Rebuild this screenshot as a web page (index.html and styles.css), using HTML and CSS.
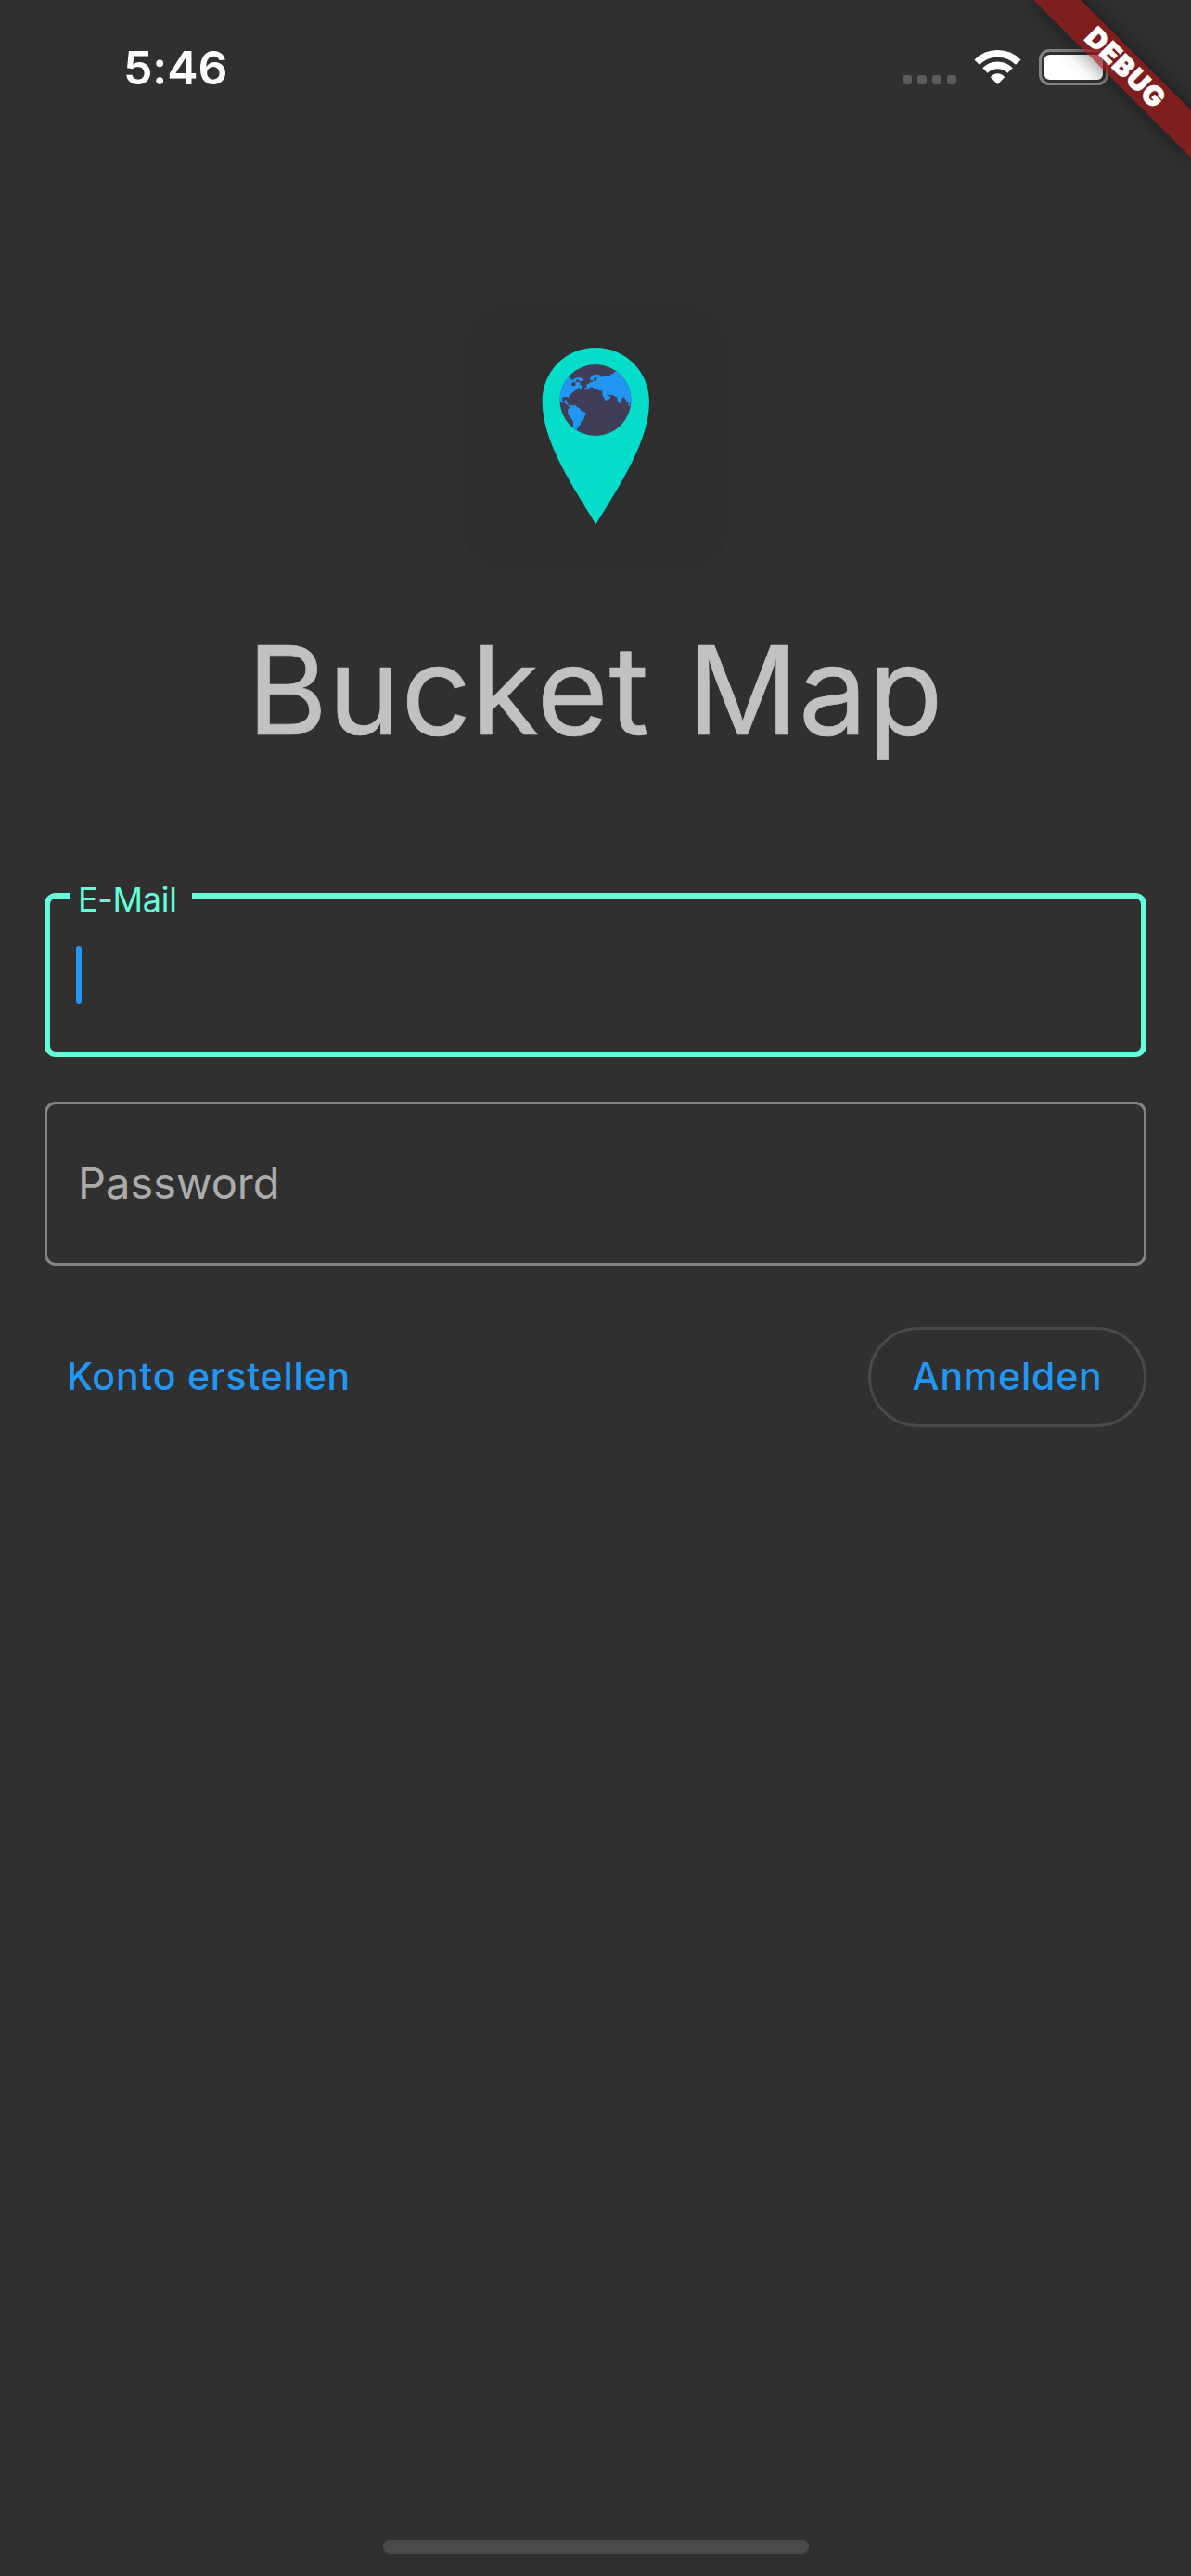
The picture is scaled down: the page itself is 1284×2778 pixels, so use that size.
FILE: index.html
```html
<!DOCTYPE html>
<html lang="de">
<head>
<meta charset="utf-8">
<title>Bucket Map</title>
<link rel="stylesheet" href="styles.css">
</head>
<body>
<header class="status">
  <span class="time">5:46</span>
  <svg class="status-icons" width="240" height="45" viewBox="0 0 720 135" aria-hidden="true">
    <g fill="#5c5c5c">
      <rect x="9" y="93" width="30" height="30" rx="9"/>
      <rect x="57" y="93" width="30" height="30" rx="9"/>
      <rect x="105" y="93" width="30" height="30" rx="9"/>
      <rect x="153" y="93" width="30" height="30" rx="9"/>
    </g>
    <g fill="none" stroke="#fff" stroke-width="23">
      <path d="M249.500 51.500A94.500 94.500 0 0 1 383.500 51.500"/>
      <path d="M275.800 77.800A57.500 57.500 0 0 1 357.200 77.800"/>
    </g>
    <path d="M316.500 123L293.500 100Q303 88 316.500 88T339.500 100Z" fill="#fff"/>
    <rect x="454.500" y="13.500" width="216" height="108" rx="30" fill="none" stroke="#838383" stroke-width="9"/>
    <rect x="467" y="27" width="190" height="81" rx="18" fill="#fff"/>
    <path d="M684 50Q697 57 697 67T684 85Z" fill="#838383"/>
  </svg>
</header>
<div class="debug-corner"><div class="debug"><div class="debug-shadow"></div><div class="debug-band">DEBUG</div></div></div>
<main class="login">
  <svg class="logo" width="288" height="288" viewBox="54 51 864 864" aria-hidden="true">
    <clipPath id="globe"><circle cx="486" cy="364.500" r="115.500"/></clipPath>
    <path d="M486 195C583 195 660 272 660 369C660 490 575 625 487 766C399 625 314 490 314 369C314 272 389 195 486 195Z" fill="#05dcc9"/>
    <circle cx="486" cy="364.500" r="115.500" fill="#403d56"/>
    <g clip-path="url(#globe)" fill="#2296f3">
      <path transform="translate(300 180)" d="M60 195V100L98 108L106 112V117L100 119L107 117L113 119L120 113L131 111L143 114V123H135L128 118L122 121L124 126L113 127L107 133L110 137L119 139L122 137L120 130L125 126L132 125L137 129L136 134L141 137V147H136L134 143L129 146L132 149L124 150L113 159L101 170L99 178L94 174H84L79 177L78 186L86 189L88 184L93 183L91 192L96 194L98 201L105 204L102 208L94 199L88 195L84 192L72 193Z"/>
      <path transform="translate(300 180)" d="M104 204L107 199L111 202L121 201L125 206L131 209L137 213L139 220L147 221L154 225L156 230L150 238L149 247L140 253L138 262L131 270V273L126 277V283L108 279L111 272L114 268V255L110 247L103 240L96 226L97 213L103 210Z"/>
      <path fill-rule="evenodd" d="M450 325L460 322L456 316L467 308L478 304V300H469V292L480 283L494 281L503 285L501 290L515 288L535 284V280L547 279L543 274L556 271L585 285L610 312V375H596L599 384H594L591 378L596 372L588 370L583 362L578 354L571 360L568 364V373L562 375L556 364V356L542 348H530L522 343L525 349L536 354L530 362L518 366L513 357L508 345V335L494 332V327L489 326L487 331L478 324L469 322L464 330L450 331ZM480 299L481 294L486 291L492 292L488 297L492 300L482 303Z"/>
    </g>
  </svg>
  <h1 class="title">Bucket Map</h1>
  <div class="field field-active"><label class="field-label">E-Mail</label><div class="caret"></div></div>
  <div class="field field-idle"><span class="placeholder">Password</span></div>
  <div class="actions"><a class="link">Konto erstellen</a><a class="button"><span>Anmelden</span></a></div>
</main>
<div class="home"></div>
</body>
</html>
```
FILE: styles.css
```css
* { box-sizing: border-box; }
body {
  margin: 0;
  width: 1284px;
  height: 2778px;
  position: relative;
  overflow: hidden;
  display: flex;
  flex-direction: column;
  background: #303030;
  font-family: Inter, "Liberation Sans", sans-serif;
}
.status {
  flex: none;
  height: 141px;
  padding: 43px 74px 0 133px;
  display: flex;
  justify-content: space-between;
  align-items: flex-start;
}
.time {
  color: #fff;
  font-size: 50px;
  line-height: 60px;
  font-weight: 600;
  letter-spacing: -.1px;
}
.status-icons { margin-top: 7px; }
.debug-corner {
  position: absolute;
  top: 0;
  right: 0;
  width: 260px;
  height: 260px;
  overflow: hidden;
}
.debug {
  position: absolute;
  top: 0;
  left: 260px;
  width: 0;
  height: 0;
  transform: rotate(45deg);
}
.debug-shadow, .debug-band {
  position: absolute;
  top: 83.500px;
  left: -120px;
  width: 240px;
  height: 36px;
}
.debug-shadow { background: rgba(0, 0, 0, .5); filter: blur(12px); }
.debug-band {
  padding-left: 4px;
  background: rgba(183, 28, 28, .627);
  color: #fff;
  font-size: 29.500px;
  line-height: 35px;
  font-weight: 900;
  letter-spacing: 1.200px;
  -webkit-text-stroke: .8px #fff;
  text-align: center;
}
.login {
  flex: 1;
  padding: 186px 48px 0;
  display: flex;
  flex-direction: column;
}
.logo {
  align-self: center;
  border-radius: 48px;
  background: #2e2e2e;
}
.title {
  margin: 49px 0 139px;
  height: 160px;
  line-height: 160px;
  font-size: 132px;
  font-weight: 400;
  letter-spacing: .7px;
  word-spacing: 3px;
  -webkit-text-stroke: .7px #c1c1c1;
  text-align: center;
  white-space: nowrap;
  color: #c1c1c1;
}
.field {
  position: relative;
  height: 177px;
  border-radius: 12px;
  display: flex;
  align-items: center;
}
.field-active { border: 6px solid #64ffda; padding: 0 28px; }
.field-idle { border: 3px solid #838383; padding: 0 33px; margin-top: 48px; }
.field-label {
  position: absolute;
  top: -23px;
  left: 21px;
  width: 132px;
  height: 48px;
  padding-left: 9px;
  line-height: 48px;
  background: #303030;
  color: #64ffda;
  font-size: 36px;
  letter-spacing: -.3px;
}
.caret { width: 6px; height: 63px; border-radius: 3px; background: #2196f3; }
.placeholder { color: #acacac; font-size: 47px; line-height: 60px; padding-bottom: 2px; }
.actions {
  margin-top: 66px;
  padding-left: 24px;
  display: flex;
  justify-content: space-between;
  align-items: center;
  color: #2196f3;
  font-size: 41px;
  font-weight: 500;
  letter-spacing: .780px;
}
.link, .button span { padding-bottom: 2px; }
.button {
  width: 300px;
  height: 108px;
  display: flex;
  align-items: center;
  justify-content: center;
  border: 3px solid #4a4a4a;
  border-radius: 54px;
}
.home {
  flex: none;
  align-self: center;
  width: 459px;
  height: 15px;
  margin-bottom: 24px;
  border-radius: 8px;
  background: #4a4a4a;
}
```
